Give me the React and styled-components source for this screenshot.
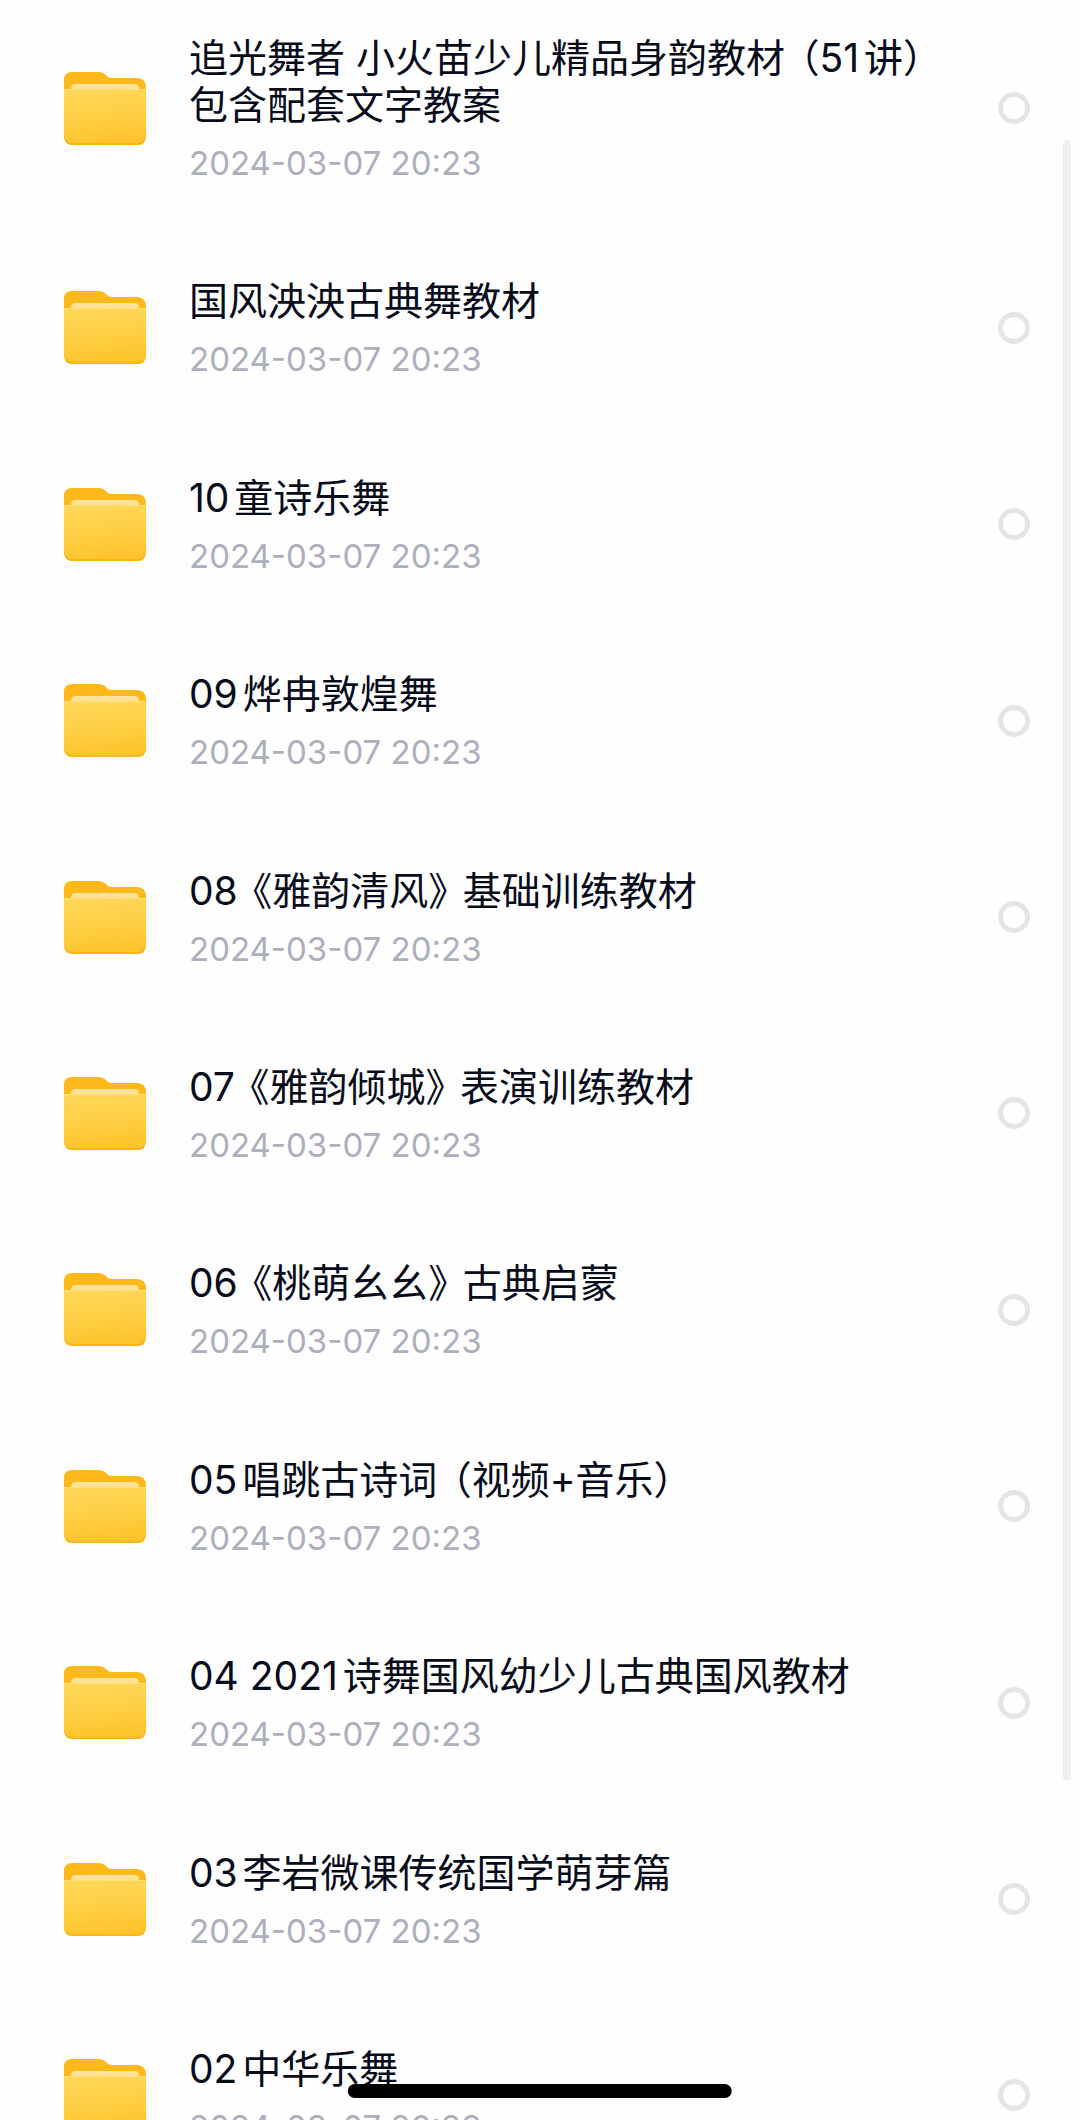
import React from "react";
import styled, { createGlobalStyle, css } from "styled-components";

const GlobalStyle = createGlobalStyle`
  * {
    box-sizing: border-box;
  }

  body {
    margin: 0;
    background: #fefefe;
    font-family: Inter, "Noto Sans CJK SC", sans-serif;
  }
`;

const Screen = styled.main`
  position: relative;
  height: 100vh;
  overflow: hidden;
`;

const FolderList = styled.ul`
  display: flex;
  flex-direction: column;
  gap: 4.5vh;
  margin: 0;
  padding: 34px 50px 96px 64px;
  list-style: none;
`;

const FolderRow = styled.label`
  display: flex;
  align-items: center;
  cursor: pointer;
`;

const FolderSvg = styled.svg`
  flex: none;
  width: 82px;
  height: 73px;
  margin-right: 43px;
`;

const FolderInfo = styled.div`
  flex: 1;
  min-width: 0;
  padding-right: 40px;
`;

const FolderName = styled.div`
  color: #070b1a;
  font-size: 39px;
  line-height: 47px;
  text-autospace: normal;
`;

// Half-width form of a full-width bracket, with some air on its outer side
const Bracket = styled.span`
  font-feature-settings: "halt";

  ${props =>
    props.$opening
      ? css`
          margin-left: 15px;
        `
      : css`
          margin-right: 15px;
        `}
`;

const FolderDate = styled.time`
  display: block;
  margin-top: 17px;
  color: #adb0bc;
  font-size: 33px;
  line-height: 37px;
`;

const SelectCircle = styled.input`
  appearance: none;
  flex: none;
  width: 32px;
  height: 32px;
  margin: 0;
  border: 5px solid #e4e6e6;
  border-radius: 50%;
  cursor: pointer;

  &:checked {
    border-color: #fdc42c;
    background: #fdc42c;
  }
`;

const ScrollThumb = styled.div`
  position: absolute;
  top: 6.6%;
  right: 9px;
  width: 8px;
  height: 77.4%;
  border-radius: 4px;
  background: #efefef;
`;

const HomeIndicator = styled.div`
  position: absolute;
  bottom: 22px;
  left: 50%;
  width: 35.6%;
  height: 14px;
  border-radius: 7px;
  background: #000;
  transform: translateX(-50%);
`;

const folders = [
  "追光舞者 小火苗少儿精品身韵教材（51讲）包含配套文字教案",
  "国风泱泱古典舞教材",
  "10童诗乐舞",
  "09烨冉敦煌舞",
  "08《雅韵清风》基础训练教材",
  "07《雅韵倾城》表演训练教材",
  "06《桃萌幺幺》古典启蒙",
  "05唱跳古诗词（视频+音乐）",
  "04 2021诗舞国风幼少儿古典国风教材",
  "03李岩微课传统国学萌芽篇",
  "02中华乐舞"
].map(name => ({ name, date: "2024-03-07 20:23" }));

// Gradients shared by every folder icon
function IconDefs() {
  return (
    <svg width="0" height="0" style={{ display: "block" }} aria-hidden="true">
      <defs>
        <linearGradient id="folderFront" x1="0" y1="0" x2="0.15" y2="1">
          <stop offset="0" stopColor="#fed85a" />
          <stop offset="0.5" stopColor="#fed047" />
          <stop offset="1" stopColor="#fdc42c" />
        </linearGradient>
        <linearGradient id="folderPaper" x1="0" y1="0" x2="0" y2="1">
          <stop offset="0" stopColor="#ffe3a0" />
          <stop offset="1" stopColor="#ffdc7c" />
        </linearGradient>
      </defs>
    </svg>
  );
}

function FolderIcon() {
  return (
    <FolderSvg viewBox="0 0 82 73" aria-hidden="true">
      <path
        d="M0 8Q0 0 8 0H35Q39 0 42 3L44 5Q46 6 49 6H73Q82 6 82 16V30H0Z"
        fill="#fdb91a"
      />
      <path d="M7 24V17Q7 12 12 12H70Q75 12 75 17V24Z" fill="url(#folderPaper)" />
      <path d="M0 17H82V64Q82 73 73 73H9Q0 73 0 64Z" fill="url(#folderFront)" />
      <path
        d="M0 63Q0 73 9 73H73Q82 73 82 63Q81 71 73 71H9Q1 71 0 63Z"
        fill="#fbb616"
      />
      <path d="M0 17H82V18H0Z" fill="#ffe07a" />
    </FolderSvg>
  );
}

const renderName = name =>
  name.split(/([《》（）])/).map((part, index) =>
    /^[《》（）]$/.test(part) ? (
      <Bracket key={index} $opening={part === "《" || part === "（"}>
        {part}
      </Bracket>
    ) : (
      part
    )
  );

function Folder({ folder }) {
  return (
    <li>
      <FolderRow>
        <FolderIcon />
        <FolderInfo>
          <FolderName>{renderName(folder.name)}</FolderName>
          <FolderDate dateTime={folder.date}>{folder.date}</FolderDate>
        </FolderInfo>
        <SelectCircle type="checkbox" />
      </FolderRow>
    </li>
  );
}

export default function App() {
  return (
    <Screen lang="zh-CN">
      <GlobalStyle />
      <IconDefs />
      <FolderList>
        {folders.map(folder => (
          <Folder key={folder.name} folder={folder} />
        ))}
      </FolderList>
      <ScrollThumb />
      <HomeIndicator />
    </Screen>
  );
}
